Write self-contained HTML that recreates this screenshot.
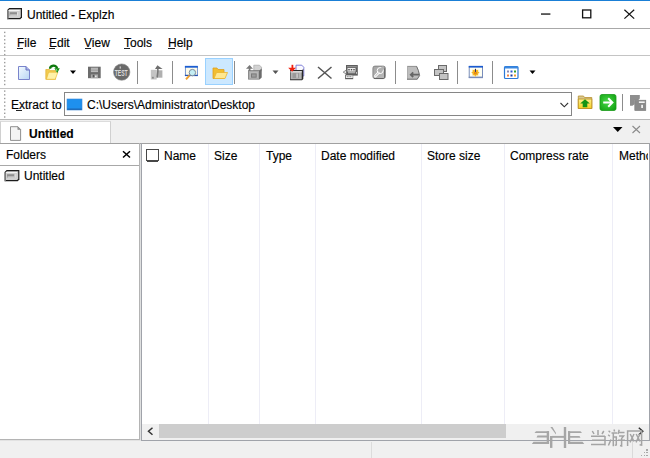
<!DOCTYPE html>
<html><head><meta charset="utf-8">
<style>
*{margin:0;padding:0;box-sizing:border-box}
html,body{width:650px;height:458px;overflow:hidden;background:#fff;font-family:"Liberation Sans",sans-serif;font-size:12px;color:#000}
.a{position:absolute}
.t{position:absolute;white-space:nowrap;line-height:14px;-webkit-text-stroke:0.15px #000}
#ov{position:absolute;left:0;top:0}
</style></head><body>
<!-- backgrounds -->
<div class="a" style="left:0;top:120px;width:650px;height:23px;background:#f0f0f0"></div>
<div class="a" style="left:0;top:121px;width:111px;height:23px;background:#fff;border-left:1px solid #d0d0d0;border-top:1px solid #dcdcdc;border-right:1px solid #d0d0d0"></div>
<div class="a" style="left:0;top:441px;width:650px;height:17px;background:#f0f0f0"></div>

<!-- title -->
<div class="t" style="left:27px;top:8px">Untitled - Explzh</div>

<!-- menu bar -->
<div class="t" style="left:17px;top:36px">File</div>
<div class="t" style="left:49px;top:36px">Edit</div>
<div class="t" style="left:84px;top:36px">View</div>
<div class="t" style="left:124px;top:36px">Tools</div>
<div class="t" style="left:168px;top:36px">Help</div>

<!-- address bar -->
<div class="t" style="left:11px;top:98px">Extract to</div>
<div class="t" style="left:87px;top:98px">C:\Users\Administrator\Desktop</div>

<!-- tab -->
<div class="t" style="left:29px;top:127px;font-weight:bold">Untitled</div>

<!-- left pane -->
<div class="t" style="left:6px;top:148px">Folders</div>
<div class="t" style="left:24px;top:169px">Untitled</div>

<!-- list header -->
<div class="t" style="left:164px;top:149px">Name</div>
<div class="t" style="left:214px;top:149px">Size</div>
<div class="t" style="left:266px;top:149px">Type</div>
<div class="t" style="left:321px;top:149px">Date modified</div>
<div class="t" style="left:427px;top:149px">Store size</div>
<div class="t" style="left:510px;top:149px">Compress rate</div>
<div class="t" style="left:619px;top:149px;width:29px;overflow:hidden">Method</div>

<svg id="ov" width="650" height="458" viewBox="0 0 650 458">
<g shape-rendering="crispEdges">
 <!-- accent line -->
 <rect x="0" y="0" width="650" height="1" fill="#1a7fd6"/>
 <!-- separators -->
 <rect x="0" y="28" width="650" height="1" fill="#a8a8a8"/>
 <rect x="0" y="55" width="650" height="1" fill="#c4c4c4"/>
 <rect x="0" y="88" width="650" height="1" fill="#c4c4c4"/>
 <rect x="0" y="119" width="650" height="1" fill="#b8b8b8"/>
 <rect x="0" y="143" width="650" height="1" fill="#a0a0a0"/>
 <!-- window controls -->

 <!-- grips -->
 <g fill="#9c9c9c" shape-rendering="auto">
  <rect x="4" y="31.7" width="1.4" height="1.4"/><rect x="4" y="35.4" width="1.4" height="1.4"/><rect x="4" y="39.1" width="1.4" height="1.4"/><rect x="4" y="42.8" width="1.4" height="1.4"/><rect x="4" y="46.5" width="1.4" height="1.4"/><rect x="4" y="50.2" width="1.4" height="1.4"/><rect x="4" y="53.9" width="1.4" height="1.4"/><rect x="4" y="58.3" width="1.4" height="1.4"/><rect x="4" y="61.9" width="1.4" height="1.4"/><rect x="4" y="65.5" width="1.4" height="1.4"/><rect x="4" y="69.1" width="1.4" height="1.4"/><rect x="4" y="72.7" width="1.4" height="1.4"/><rect x="4" y="76.4" width="1.4" height="1.4"/><rect x="4" y="80.1" width="1.4" height="1.4"/><rect x="4" y="83.8" width="1.4" height="1.4"/><rect x="4" y="90.4" width="1.4" height="1.4"/><rect x="4" y="94.1" width="1.4" height="1.4"/><rect x="4" y="97.8" width="1.4" height="1.4"/><rect x="4" y="101.5" width="1.4" height="1.4"/><rect x="4" y="105.2" width="1.4" height="1.4"/><rect x="4" y="108.9" width="1.4" height="1.4"/><rect x="4" y="112.6" width="1.4" height="1.4"/><rect x="4" y="116.3" width="1.4" height="1.4"/>
 </g>
 <!-- toolbar separators -->
 <g fill="#8c8c8c">
  <rect x="137" y="61" width="1" height="23"/>
  <rect x="172" y="61" width="1" height="23"/>
  <rect x="234" y="61" width="1" height="23"/>
  <rect x="395" y="61" width="1" height="23"/>
  <rect x="457" y="61" width="1" height="23"/>
  <rect x="492" y="61" width="1" height="23"/>
  <rect x="622" y="94" width="1" height="17"/>
 </g>
 <!-- highlighted button -->
 <rect x="205.5" y="58.5" width="27" height="26" fill="#cce8ff" stroke="#99d1ff"/>
 <!-- combo box -->
 <rect x="64.5" y="92.5" width="507" height="23" fill="none" stroke="#868686"/>
 <!-- left pane borders -->
 <rect x="0" y="165" width="139" height="1" fill="#a8a8a8"/>
 <rect x="139" y="143" width="1" height="297" fill="#b4b4b4"/>
 <rect x="140" y="144" width="1" height="296" fill="#dfe0e0"/>
 <rect x="0" y="439" width="140" height="1" fill="#b4b4b4"/>
 <rect x="0" y="440" width="141" height="1" fill="#e2e2e2"/>
 <!-- right pane borders -->
 <rect x="141" y="143" width="1" height="298" fill="#a0a3aa"/>
 <rect x="649" y="143" width="1" height="298" fill="#a0a3aa"/>
 <rect x="141" y="440" width="509" height="1" fill="#a0a3aa"/>
 <!-- column grid -->
 <g fill="#ededf6">
  <rect x="208" y="144" width="1" height="280"/>
  <rect x="259" y="144" width="1" height="280"/>
  <rect x="315" y="144" width="1" height="280"/>
  <rect x="421" y="144" width="1" height="280"/>
  <rect x="504" y="144" width="1" height="280"/>
  <rect x="612" y="144" width="1" height="280"/>
 </g>
 <!-- scrollbar -->
 <rect x="142" y="424" width="507" height="16" fill="#f0f0f0"/>
 <rect x="159" y="424" width="347" height="14" fill="#cdcdcd"/>
 <!-- status bar sep -->
 <rect x="632" y="441" width="1" height="17" fill="#dadada"/>
 <rect x="371" y="442" width="1" height="16" fill="#dcdcdc"/>
 <!-- size grip -->
 <g fill="#a8a8a8">
  <rect x="646.3" y="449.2" width="1.3" height="1.3"/>
  <rect x="643.5" y="452" width="1.3" height="1.3"/><rect x="646.3" y="452" width="1.3" height="1.3"/>
  <rect x="640.7" y="454.9" width="1.3" height="1.3"/><rect x="643.5" y="454.9" width="1.3" height="1.3"/><rect x="646.3" y="454.9" width="1.3" height="1.3"/>
 </g>
 <!-- mnemonic underlines -->
 <g fill="#222">
  <rect x="17" y="48" width="6" height="1"/>
  <rect x="49" y="48" width="6" height="1"/>
  <rect x="85" y="48" width="6" height="1"/>
  <rect x="124" y="48" width="6" height="1"/>
  <rect x="168" y="48" width="7" height="1"/>
  <rect x="16" y="110" width="6" height="1"/>
 </g>
 <!-- checkbox -->
 <rect x="146.5" y="149.5" width="12" height="11.5" rx="0.8" fill="#fff" stroke="#474747" stroke-width="1.1"/>
</g>

<!-- close X -->
<rect x="541" y="13.4" width="9.4" height="1.3" fill="#111"/>
<rect x="582.6" y="10" width="8.2" height="7.8" fill="none" stroke="#111" stroke-width="1.3"/>
<path d="M624.4 9.8L634.2 18.6M634.2 9.8L624.4 18.6" stroke="#111" stroke-width="1.2"/>

<!-- title icon -->
<g>
 <path d="M9.2 8H22V17.5L20.3 19.2H7.2V10Z" fill="#1c1c1c"/>
 <path d="M9.5 9.2H20.8V17L19.6 18H8.4V10.3Z" fill="#cfcfcf"/>
 <path d="M7.2 10V19.2H8.4V10.3Z" fill="#8a8a8a"/>
 <rect x="8.6" y="10.1" width="11" height="0.9" fill="#f6f6f6"/>
 <rect x="9.6" y="12.2" width="7.6" height="3.5" fill="#8e8e8e"/>
 <rect x="10.1" y="14.6" width="6.8" height="0.9" fill="#f2f2f2"/>
 <rect x="17.2" y="12.2" width="0.8" height="3.5" fill="#e8e8e8"/>
</g>
<!-- new doc -->
<g>
 <defs><linearGradient id="gd" x1="0" y1="0" x2="1" y2="1"><stop offset="0" stop-color="#f4fbff"/><stop offset="1" stop-color="#b8d4f4"/></linearGradient></defs>
 <path d="M18.5 66.5H26L29.5 70V79.5H18.5Z" fill="url(#gd)" stroke="#7a84cc"/>
 <path d="M26 66.5V70H29.5" fill="#aab4e8" stroke="#6a72c0"/>
</g>

<!-- open folder w/ green arrow -->
<g>
 <path d="M45.8 69.5H49.5L50.5 70.6H55.5V79.3H45.8Z" fill="#f2cc50" stroke="#e2b030" stroke-width="0.7"/>
 <path d="M46.4 79.3L48.6 72.2H57.8L55.3 79.3Z" fill="#fff2a8" stroke="#ecbc38" stroke-width="0.7"/>
 <path d="M50 68.8C50.2 65.2 55.8 64.3 57.2 68.6" fill="none" stroke="#0e780e" stroke-width="2.3"/>
 <path d="M54.4 68.2H59.8L57.2 73Z" fill="#128a12"/>
 <path d="M56 68.9L57.1 71" stroke="#7ce07c" stroke-width="1.1"/>
</g>
<!-- dropdown arrows -->
<path d="M70 70.5H76L73 74Z" fill="#000"/>
<path d="M272.5 70.5H278.5L275.5 74Z" fill="#555"/>
<path d="M529.5 70.5H535.5L532.5 74Z" fill="#000"/>

<!-- save disk -->
<g>
 <rect x="88" y="66.7" width="12.7" height="11.5" fill="#6c6c6c"/>
 <rect x="90.9" y="67.7" width="7.1" height="4.4" fill="#bcbcbc"/>
 <rect x="90.9" y="68.8" width="7.1" height="0.6" fill="#9a9a9a"/>
 <rect x="90.9" y="70.4" width="7.1" height="0.6" fill="#9a9a9a"/>
 <rect x="90.9" y="74.4" width="7.1" height="3.8" fill="#a8a8a8"/>
 <rect x="92.7" y="74.8" width="1.7" height="2.6" fill="#555"/>
 <circle cx="95.8" cy="76.4" r="0.8" fill="#eee"/>
</g>
<!-- TEST circle -->
<g>
 <circle cx="121.7" cy="72.1" r="8.2" fill="#6a6a6a" stroke="#8a8a8a" stroke-width="0.6"/>
 <text x="121.2" y="76" font-family="Liberation Sans" font-size="9" font-weight="bold" fill="#dcdcdc" text-anchor="middle" textLength="13" lengthAdjust="spacingAndGlyphs">TEST</text>
 <path d="M120.2 66.4V68.6" stroke="#e8e8e8" stroke-width="1"/>
</g>
<!-- up icon -->
<g>
 <path d="M150.8 69.8H156.7V79.5H150.8Z" fill="#c4c4c4"/>
 <path d="M156.7 70.3H162.4V77.7H156.7Z" fill="#b0b0b0"/>
 <path d="M157.4 65.3L162.6 68.9H155Z" fill="#6e6e6e"/>
 <path d="M157.8 68.8C158.4 72 157 75 157.2 77.5" fill="none" stroke="#787878" stroke-width="1.6"/>
 <rect x="152" y="76.8" width="1.8" height="1.8" fill="#8a8a8a"/>
</g>
<!-- find -->
<g>
 <rect x="185.4" y="66.4" width="12" height="9.3" fill="#fdfbea" stroke="#6a8ccc" stroke-width="0.9"/>
 <rect x="184.9" y="65.9" width="12.9" height="1.8" fill="#1c5ed2"/>
 <rect x="184.9" y="74.8" width="12.9" height="1.2" fill="#2452b4"/>
 <circle cx="192.4" cy="72.6" r="3.2" fill="#c4eef4" stroke="#7c8c9c" stroke-width="1"/>
 <path d="M189.6 75.4L186 79.4" stroke="#f0a030" stroke-width="2"/>
</g>
<!-- highlighted folder -->
<g>
 <path d="M213 68H217L218 69.5H224V78.5H213Z" fill="#f2be30" stroke="#e0a020" stroke-width="0.8"/>
 <path d="M214 78.5L216.5 72.5H227.5L225 78.5Z" fill="#ffe890" stroke="#eab430" stroke-width="0.8"/>
</g>

<!-- extract -->
<g>
 <path d="M253.8 65.2H259.5L261.5 67.2V71H253.8Z" fill="#d2d2d2" stroke="#a8a8a8" stroke-width="0.7"/>
 <path d="M248.1 70.3H259.5L261.7 68.5V77.5L259.5 79.5H248.1Z" fill="#6c6c6c"/>
 <rect x="248.6" y="70.8" width="10.4" height="8.3" fill="#a6a6a6"/>
 <rect x="249.6" y="71.8" width="8.4" height="6.3" fill="#b8b8b8"/>
 <rect x="251" y="73.4" width="5.7" height="4.3" fill="#7a7a7a"/>
 <rect x="252" y="74.4" width="3.7" height="2.3" fill="#9c9c9c"/>
 <path d="M249.6 68V71" stroke="#777" stroke-width="1.7"/>
 <path d="M246 68.8L249.6 65L253 68.8Z" fill="#777"/>
</g>
<!-- add -->
<g>
 <path d="M296 65.2H301.8L303.8 67.3V76H296Z" fill="#fafaff" stroke="#7272d4" stroke-width="0.9"/>
 <path d="M290.1 70.1H302.2L303.3 69V79L302 80.3H290.1Z" fill="#2a2a2a"/>
 <rect x="290.6" y="71" width="11.1" height="8.3" fill="#b4b4b4"/>
 <rect x="290.6" y="71" width="11.1" height="1.5" fill="#d8d8d8"/>
 <rect x="292.5" y="73.1" width="6.5" height="5.1" fill="#9a9a9a"/>
 <rect x="296.6" y="73.5" width="0.9" height="4.3" fill="#eee"/>
 <path d="M292.4 64.8V68.5" stroke="#f02010" stroke-width="1.8"/>
 <path d="M288.2 67.8H296L292.1 71.8Z" fill="#f02010"/>
</g>
<!-- delete X -->
<path d="M318 67L331.5 78.5M331.5 67L318 78.5" stroke="#555" stroke-width="1.5"/>

<!-- machine -->
<g>
 <rect x="346" y="65" width="11.8" height="10.6" fill="#5e5e5e"/>
 <rect x="345.1" y="74.6" width="8.1" height="4.6" fill="#5e5e5e"/>
 <rect x="347" y="66" width="9.8" height="1.4" fill="#8e8e8e"/>
 <rect x="347.5" y="68" width="8" height="3.6" fill="#ececec"/>
 <rect x="348.3" y="69" width="1.4" height="1.4" fill="#4a4a4a"/><rect x="350.8" y="69" width="1.4" height="1.4" fill="#4a4a4a"/><rect x="353.3" y="69" width="1.4" height="1.4" fill="#4a4a4a"/>
 <rect x="348" y="72.3" width="7.2" height="0.9" fill="#d0d0d0"/>
 <path d="M343.2 72.1L346.4 70V74.2Z" fill="#f2f2f2" stroke="#5e5e5e" stroke-width="0.7"/>
 <rect x="345.9" y="75.4" width="6.8" height="2.6" fill="#f2f2f2"/>
 <path d="M346.8 76.7H352" stroke="#666" stroke-width="0.9" stroke-dasharray="1 0.7"/>
 <rect x="356.2" y="72" width="0.8" height="1.8" fill="#e0e0e0"/>
</g>
<!-- wrench -->
<g>
 <defs><linearGradient id="wg" x1="0" y1="0" x2="1" y2="1"><stop offset="0" stop-color="#a4a4a4"/><stop offset="1" stop-color="#bcbcbc"/></linearGradient></defs>
 <rect x="372.9" y="66.1" width="12.4" height="12.5" rx="2" fill="url(#wg)" stroke="#7a7a7a" stroke-width="0.8"/>
 <path d="M384.6 67.5V77.5L383.4 78.5H374" fill="none" stroke="#5e5e5e" stroke-width="0.9"/>
 <circle cx="380.2" cy="70.6" r="3" fill="none" stroke="#fff" stroke-width="1"/>
 <path d="M378.4 72.8L375.3 76.2" stroke="#fff" stroke-width="2.6" stroke-linecap="round"/>
 <path d="M378.4 72.8L375.3 76.2" stroke="#b2b2b2" stroke-width="0.9" stroke-linecap="round"/>
 <circle cx="380.2" cy="70.6" r="2" fill="#b0b0b0"/>
 <path d="M380.2 70.6L383.8 67" stroke="#b0b0b0" stroke-width="2.6"/>
</g>
<!-- doc arrow -->
<g>
 <path d="M407.1 66H416.8L418.6 70.6L419.8 75.5L417.4 79.5H407.1Z" fill="#bdbdbd"/>
 <path d="M407.1 66.4H416.6" stroke="#8c8c8c" stroke-width="0.9"/>
 <path d="M407.5 66V79.5" stroke="#a8a8a8" stroke-width="0.8"/>
 <path d="M416.6 66.4L418.4 70.6L419.6 75.5L417.2 79.2H407.1" fill="none" stroke="#6e6e6e" stroke-width="1"/>
 <path d="M411 74.7H419M413.2 72.4L410.8 74.7L413.2 77" fill="none" stroke="#666" stroke-width="1.8"/>
</g>
<!-- stacked windows -->
<g stroke="#6a6a6a" stroke-width="1" fill="#c4c4c4">
 <rect x="438.5" y="65.5" width="8" height="6"/>
 <rect x="434.5" y="69.5" width="9" height="6"/>
 <rect x="439.5" y="73.5" width="8.5" height="6"/>
</g>

<!-- window gear -->
<g>
 <rect x="469.2" y="66.4" width="13.3" height="11.2" fill="#fffff2" stroke="#6c82b4" stroke-width="0.9"/>
 <rect x="468.75" y="65.9" width="14.2" height="1.7" fill="#1a5ad0"/>
 <rect x="468.75" y="76.6" width="14.2" height="1.5" fill="#7a8cb8"/>
 <path d="M475.40,68.50 L476.51,69.92 L478.30,69.70 L478.08,71.49 L479.50,72.60 L478.08,73.71 L478.30,75.50 L476.51,75.28 L475.40,76.70 L474.29,75.28 L472.50,75.50 L472.72,73.71 L471.30,72.60 L472.72,71.49 L472.50,69.70 L474.29,69.92Z" fill="#f4b828"/>
 <circle cx="475.4" cy="73.0" r="1.6" fill="#e88a10"/>
 <rect x="475" y="68.9" width="1" height="3" fill="#2a2a70"/>
</g>
<!-- view -->
<g>
 <rect x="504.5" y="66.5" width="13.5" height="12" rx="1" fill="#fff" stroke="#2a78d8" stroke-width="1.2"/>
 <rect x="504.5" y="66.5" width="13.5" height="2" fill="#3a88e0"/>
 <rect x="507" y="70.5" width="2" height="2" fill="#8a8ab8"/><rect x="510.5" y="70.5" width="2" height="2" fill="#2a5ad0"/><rect x="514" y="70.5" width="2" height="2" fill="#30a030"/>
 <rect x="507" y="74.5" width="2" height="2" fill="#f08040"/><rect x="510.5" y="74.5" width="2" height="2" fill="#1a3aa0"/><rect x="514" y="74.5" width="2" height="2" fill="#f0a030"/>
</g>

<!-- combo content icon -->
<rect x="67" y="99" width="15" height="11" fill="#1e90ee" stroke="#3a88d8" stroke-width="0.6"/>
<rect x="67.3" y="108.6" width="14.4" height="1.1" fill="#1d5fa8"/>
<!-- combo chevron -->
<path d="M560.5 103L564.3 106.8L568.1 103" fill="none" stroke="#333" stroke-width="1.1"/>

<!-- folder up -->
<g>
 <defs><linearGradient id="fy" x1="0" y1="0" x2="0" y2="1"><stop offset="0" stop-color="#fff090"/><stop offset="1" stop-color="#f4d020"/></linearGradient></defs>
 <path d="M578.3 96H583.5L584.5 97.5H591.8V108.5H578.3Z" fill="#d8c890" stroke="#b89030" stroke-width="0.8"/>
 <path d="M578.3 99H591.8V108.5H578.3Z" fill="url(#fy)" stroke="#c09428" stroke-width="0.9"/>
 <path d="M585 99.3L589.8 103.6H587.3V107.2H582.7V103.6H580.2Z" fill="#149414"/>
</g>
<!-- green go -->
<g>
 <defs><radialGradient id="gg" cx="0.45" cy="0.45" r="0.7"><stop offset="0" stop-color="#48d848"/><stop offset="1" stop-color="#10a010"/></radialGradient></defs>
 <rect x="600" y="94.5" width="16" height="16" rx="2" fill="url(#gg)" stroke="#1a9a1a" stroke-width="0.8"/>
 <path d="M603.2 102.5H611.8M608.2 98.3L612.4 102.5L608.2 106.7" fill="none" stroke="#fff" stroke-width="2"/>
</g>
<!-- gray icon -->
<g>
 <path d="M630 95H639.8V98.6L638.4 100H634.6V104.2L632.4 105.8H630Z" fill="#8e8e8e"/>
 <rect x="634.8" y="100.2" width="11" height="10.4" fill="#8a8a8a" stroke="#7a7a7a" stroke-width="0.6"/>
 <rect x="638.9" y="101.4" width="5.8" height="1.6" fill="#f4f4f4"/>
 <rect x="641.2" y="104.8" width="1.8" height="3.2" fill="#f0f0f0"/>
</g>
<!-- tab doc icon -->
<g>
 <path d="M10.5 126.7H17.8L20.6 129.5V140.4H10.5Z" fill="#f4f4f4" stroke="#858585" stroke-width="0.9"/>
 <path d="M17.8 126.7V129.5H20.6Z" fill="#9a9a9a" stroke="#858585" stroke-width="0.6"/>
</g>
<!-- tab strip arrow & x -->
<path d="M613 127H622.5L617.75 132Z" fill="#000"/>
<path d="M632.5 126L640 133M640 126L632.5 133" stroke="#8a8a8a" stroke-width="1.1"/>

<!-- folders X -->
<path d="M123 151.3L130 157.5M130 151.3L123 157.5" stroke="#000" stroke-width="1.5"/>

<!-- tree icon -->
<g transform="translate(-2.6,162)">
 <path d="M9.2 8H22V17.5L20.3 19.2H7.2V10Z" fill="#1c1c1c"/>
 <path d="M9.5 9.2H20.8V17L19.6 18H8.4V10.3Z" fill="#cfcfcf"/>
 <path d="M7.2 10V19.2H8.4V10.3Z" fill="#8a8a8a"/>
 <rect x="8.6" y="10.1" width="11" height="0.9" fill="#f6f6f6"/>
 <rect x="9.6" y="12.2" width="7.6" height="3.5" fill="#8e8e8e"/>
 <rect x="10.1" y="14.6" width="6.8" height="0.9" fill="#f2f2f2"/>
 <rect x="17.2" y="12.2" width="0.8" height="3.5" fill="#e8e8e8"/>
</g>
<!-- scroll arrows -->
<path d="M152.5 427.8L148.5 431.3L152.5 434.8" fill="none" stroke="#333" stroke-width="1.5"/>
<path d="M638.8 427.8L642.8 431.3L638.8 434.8" fill="none" stroke="#333" stroke-width="1.5"/>

<!-- watermark -->
<defs><filter id="bl" x="-10%" y="-10%" width="120%" height="120%"><feGaussianBlur stdDeviation="0.35"/></filter></defs>
<g fill="#a6a6a6" filter="url(#bl)">
 <path d="M536 431.2H549V433.1H534.5Z"/>
 <path d="M537.5 435.5H549V437.4H536.5Z"/>
 <path d="M533.5 441.7H549V444H531.8Z"/>
 <rect x="546.7" y="431.2" width="2.4" height="12.8"/>
 <path d="M550.4 427L552.5 427L556 433L556 434.5Z"/>
 <rect x="550" y="436" width="2.4" height="11.9"/>
 <rect x="563.8" y="427" width="2.4" height="21"/>
 <rect x="552" y="435.9" width="12" height="1.9"/>
 <path d="M568 431.2H580.5L582 433.1H568Z"/>
 <path d="M568 435.9H579.5L580.5 437.8H568Z"/>
 <path d="M568 441.7H582.5L584.3 444H568Z"/>
 <rect x="568" y="431.2" width="2.2" height="12.8"/>
</g>
<g fill="none" stroke="#a4a4a4" stroke-width="1.5" filter="url(#bl)">
 <path d="M592.3 431L594 434M598 430V435M603.8 431L602 434M591 436.3H605M592 440.2H605M591 444.5H605M605 436V445.5"/>
 <path d="M608.6 430.8L610.2 432.2M608.2 434.8L609.8 436.2M608.4 445.5L611 439.5M614 429.5L614.6 431.5M611.5 433H617M613.3 433V446.3M613.3 437H616.3V445L614.8 445.3M619.2 429.8L618 434M618.5 432.5H624.5M619 436H623.6L621.5 438.6M618 440.3H625M621.6 438.5V446L620 445.6"/>
 <path d="M627.6 446V431H641.6V445.2L639.6 444.8M630.2 434L634 441.5M634 434L630 442.3M636.2 434L640 441.5M640 434L636 442.3"/>
</g>
</svg>
</body></html>
